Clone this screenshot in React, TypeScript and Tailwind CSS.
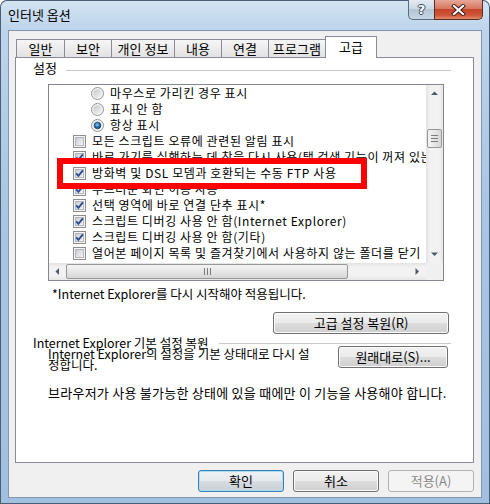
import React from 'react';

const FONT = "font-['Noto_Sans_CJK_KR',sans-serif]";

type Item = { kind: 'radio' | 'check'; label: string; on?: boolean };

const items: Item[] = [
  { kind: 'radio', label: '마우스로 가리킨 경우 표시' },
  { kind: 'radio', label: '표시 안 함' },
  { kind: 'radio', label: '항상 표시', on: true },
  { kind: 'check', label: '모든 스크립트 오류에 관련된 알림 표시' },
  { kind: 'check', label: '바로 가기를 실행하는 데 창을 다시 사용(탭 검색 기능이 꺼져 있는 경우)', on: true },
  { kind: 'check', label: '방화벽 및 DSL 모뎀과 호환되는 수동 FTP 사용', on: true },
  { kind: 'check', label: '부드러운 화면 이동 사용', on: true },
  { kind: 'check', label: '선택 영역에 바로 연결 단추 표시*', on: true },
  { kind: 'check', label: '스크립트 디버깅 사용 안 함(Internet Explorer)', on: true },
  { kind: 'check', label: '스크립트 디버깅 사용 안 함(기타)', on: true },
  { kind: 'check', label: '열어본 페이지 목록 및 즐겨찾기에서 사용하지 않는 폴더를 닫기' },
];

const tabs = [
  { label: '일반', w: 'w-[49px]' },
  { label: '보안', w: 'w-[48px]' },
  { label: '개인 정보', w: 'w-[64px]' },
  { label: '내용', w: 'w-[48px]' },
  { label: '연결', w: 'w-[48px]' },
  { label: '프로그램', w: 'w-[58px]' },
];

function CheckBox({ checked }: { checked?: boolean }) {
  return (
    <svg width="13" height="13" viewBox="0 0 13 13" className="shrink-0">
      <defs>
        <linearGradient id="cbInner" x1="0" y1="0" x2="1" y2="1">
          <stop offset="0" stopColor="#c9ccd1" />
          <stop offset="1" stopColor="#f6f6f6" />
        </linearGradient>
      </defs>
      <rect x="0.5" y="0.5" width="12" height="12" fill="#f5f5f5" stroke="#8e8f8f" />
      <rect x="2.5" y="2.5" width="8" height="8" fill="url(#cbInner)" stroke="#b3b7bc" />
      {checked && (
        <path d="M3.2 6.4 L5.4 8.9 L9.9 3.4" fill="none" stroke="#2c4a91" strokeWidth="1.8" />
      )}
    </svg>
  );
}

function Radio({ selected }: { selected?: boolean }) {
  return (
    <svg width="13" height="13" viewBox="0 0 13 13" className="shrink-0">
      <defs>
        <linearGradient id="rdInner" x1="0" y1="0" x2="1" y2="1">
          <stop offset="0" stopColor="#c5c8cc" />
          <stop offset="1" stopColor="#f4f4f4" />
        </linearGradient>
        <radialGradient id="rdDot" cx="0.45" cy="0.4" r="0.6">
          <stop offset="0" stopColor="#8fd4fb" />
          <stop offset="0.5" stopColor="#2b7fc5" />
          <stop offset="1" stopColor="#0c3461" />
        </radialGradient>
      </defs>
      <circle cx="6.5" cy="6.5" r="6" fill="#f4f4f4" stroke="#8f9296" />
      <circle cx="6.5" cy="6.5" r="4.2" fill="url(#rdInner)" />
      {selected && <circle cx="6.5" cy="6.5" r="3.3" fill="url(#rdDot)" stroke="#1c3350" strokeWidth="0.6" />}
    </svg>
  );
}

function Arrow({ dir }: { dir: 'up' | 'down' | 'left' | 'right' }) {
  const pts: Record<string, string> = {
    up: '1,5 4.5,1.5 8,5',
    down: '1,1.5 4.5,5 8,1.5',
    left: '5,1 1.5,4.5 5,8',
    right: '1.5,1 5,4.5 1.5,8',
  };
  const vertical = dir === 'up' || dir === 'down';
  return (
    <svg width={vertical ? 9 : 7} height={vertical ? 7 : 9} viewBox={vertical ? '0 0 9 7' : '0 0 7 9'}>
      <polygon points={pts[dir]} fill="#505a66" />
    </svg>
  );
}

function VScroll() {
  return (
    <div className="w-[17px] flex flex-col bg-[linear-gradient(to_right,#e3e3e3,#f2f2f2_25%,#f2f2f2_75%,#e6e6e6)]">
      <div className="h-[17px] flex items-center justify-center">
        <Arrow dir="up" />
      </div>
      <div className="flex-1 pt-[27px]">
        <div className="mx-[1px] h-[19px] rounded-[2px] border border-[#979797] bg-[linear-gradient(to_right,#f4f4f4,#e6e6e6_50%,#d6d6d6)] flex flex-col items-center justify-center gap-[2px]">
          <div className="w-[7px] h-px bg-[#7a7a7a]" />
          <div className="w-[7px] h-px bg-[#7a7a7a]" />
          <div className="w-[7px] h-px bg-[#7a7a7a]" />
        </div>
      </div>
      <div className="h-[17px] flex items-center justify-center">
        <Arrow dir="down" />
      </div>
    </div>
  );
}

function HScroll() {
  return (
    <div className="flex-1 flex bg-[linear-gradient(to_bottom,#e3e3e3,#f2f2f2_25%,#f2f2f2_75%,#e6e6e6)]">
      <div className="w-[17px] flex items-center justify-center">
        <Arrow dir="left" />
      </div>
      <div className="flex-1 py-[1px]">
        <div className="w-[282px] h-full rounded-[2px] border border-[#979797] bg-[linear-gradient(to_bottom,#f4f4f4,#e6e6e6_50%,#d6d6d6)] flex items-center justify-center gap-[2px]">
          <div className="w-px h-[7px] bg-[#7a7a7a]" />
          <div className="w-px h-[7px] bg-[#7a7a7a]" />
          <div className="w-px h-[7px] bg-[#7a7a7a]" />
        </div>
      </div>
      <div className="w-[17px] flex items-center justify-center">
        <Arrow dir="right" />
      </div>
    </div>
  );
}

function WinButton({
  children,
  className = '',
  kind = 'normal',
}: {
  children: React.ReactNode;
  className?: string;
  kind?: 'normal' | 'default' | 'disabled';
}) {
  const styles = {
    normal:
      'border-[#707070] bg-[linear-gradient(to_bottom,#f2f2f2_0%,#ebebeb_49%,#dddddd_50%,#cfcfcf_100%)] shadow-[inset_0_0_0_1px_#fbfbfb] text-black',
    default:
      'border-[#3c7fb1] bg-[linear-gradient(to_bottom,#eef2f5_0%,#e6eaee_49%,#d7dde2_50%,#c9d0d6_100%)] shadow-[inset_0_0_0_1px_#a9dcf5] text-black',
    disabled: 'border-[#adb2b5] bg-[#f4f4f4] text-[#8a8a8a]',
  };
  return (
    <div
      className={`h-[22px] shrink-0 flex items-center justify-center rounded-[3px] border leading-[14px] ${styles[kind]} ${className}`}
    >
      {children}
    </div>
  );
}

export default function App() {
  return (
    <div
      className={`relative w-[490px] h-[504px] overflow-hidden rounded-t-[7px] text-[13px] text-black ${FONT} bg-[linear-gradient(to_bottom,#d4e4f3_0px,#bdd4eb_30px,#a9c6e3_200px,#a1c0e0_504px)] shadow-[inset_0_0_0_1px_#4a5f75]`}
    >
      {/* title bar */}
      <div className="h-[30px] flex">
        <div className="pl-[8px] pt-[8px] leading-[14px] text-[13px]">인터넷 옵션</div>
        <div className="ml-auto mr-[7px] flex h-[20px]">
          <div className="w-[26px] flex items-center justify-center border border-t-0 border-r-0 border-[#5b6c7e] rounded-bl-[5px] bg-[linear-gradient(to_bottom,#e2ebf4,#cbd9e7_45%,#b3c6d8_50%,#c6d6e5)]">
            <span className="font-['DejaVu_Sans',sans-serif] font-bold text-[13px] leading-[14px] text-white [text-shadow:1px_0_0_#3a4656,-1px_0_0_#3a4656,0_1px_0_#3a4656,0_-1px_0_#3a4656]">
              ?
            </span>
          </div>
          <div className="w-[49px] flex items-center justify-center border border-t-0 border-[#5a2c24] rounded-br-[5px] bg-[linear-gradient(to_bottom,#e7a898,#d8775f_45%,#c4452c_50%,#cf5538_80%,#e28d6c)]">
            <svg width="15" height="12" viewBox="0 0 15 12">
              <path d="M3 2 L12 10 M12 2 L3 10" stroke="#3b1a14" strokeWidth="4" strokeLinecap="square" />
              <path d="M3 2 L12 10 M12 2 L3 10" stroke="#ffffff" strokeWidth="2.2" strokeLinecap="square" />
            </svg>
          </div>
        </div>
      </div>

      {/* client area */}
      <div className="ml-[8px] w-[474px] h-[468px] bg-[#f0f0f0] border border-[#8397ac] flex flex-col">
        {/* tab strip */}
        <div className="relative z-10 mt-[5px] ml-[7px] h-[21px] flex items-end">
          {tabs.map((t) => (
            <div
              key={t.label}
              className={`${t.w} h-[18px] flex items-center justify-center border border-b-0 border-[#898c95] -ml-px first:ml-0 bg-[linear-gradient(to_bottom,#f6f6f6,#ececec_50%,#e2e2e2)] leading-[14px]`}
            >
              {t.label}
            </div>
          ))}
          <div className="w-[52px] h-[22px] -mb-px -ml-px flex items-start justify-center pt-[3px] border border-b-0 border-[#898c95] bg-white leading-[14px]">
            고급
          </div>
        </div>

        {/* tab page */}
        <div className="ml-[6px] w-[459px] h-[406px] border border-[#898c95] bg-white flex flex-col">
          <div className="mt-[3px] h-[14px] flex items-center pl-[17px] pr-[22px]">
            <span className="leading-[14px]">설정</span>
            <div className="ml-[9px] mt-[4px] flex-1 h-px bg-[#c9c9c9]" />
          </div>

          <div className="ml-[32px] mt-[9px] w-[396px] h-[197px] border border-[#828790] bg-white flex flex-col">
            <div className="flex h-[178px]">
              <div className="flex-1 overflow-hidden text-[12px] tracking-[0.6px]">
                {items.map((it) => (
                  <div
                    key={it.label}
                    className={`h-[16px] flex items-center gap-[6px] whitespace-nowrap ${
                      it.kind === 'radio' ? 'pl-[42px]' : 'pl-[24px]'
                    }`}
                  >
                    {it.kind === 'radio' ? <Radio selected={it.on} /> : <CheckBox checked={it.on} />}
                    <span className="leading-[16px]">{it.label}</span>
                  </div>
                ))}
              </div>
              <VScroll />
            </div>
            <div className="flex h-[17px]">
              <HScroll />
              <div className="w-[17px] bg-[#f0f0f0]" />
            </div>
          </div>

          <div className="mt-[6px] ml-[36px] h-[14px] leading-[14px] text-[12.5px]">
            *Internet Explorer를 다시 시작해야 적용됩니다.
          </div>

          <WinButton className="mt-[11px] ml-[257px] w-[176px]">고급 설정 복원(R)</WinButton>

          <div className="mt-[3px] h-[11px] flex items-center pl-[17px] pr-[22px]">
            <span className="leading-[11px] whitespace-nowrap text-[12.5px]">Internet Explorer 기본 설정 복원</span>
            <div className="ml-[11px] mt-[2px] flex-1 h-px bg-[#c9c9c9]" />
          </div>

          <div className="flex items-start">
            <div className="ml-[32px] w-[280px] leading-[11px] whitespace-nowrap text-[12.5px]">
              Internet Explorer의 설정을 기본 상태대로 다시 설
              <br />
              정합니다.
            </div>
            <WinButton className="ml-[10px] -mt-[2px] w-[110px]">원래대로(S)...</WinButton>
          </div>

          <div className="mt-[17px] ml-[32px] leading-[12px] whitespace-nowrap tracking-[0.25px]">
            브라우저가 사용 불가능한 상태에 있을 때에만 이 기능을 사용해야 합니다.
          </div>
        </div>

        {/* dialog buttons */}
        <div className="mt-[7px] mr-[7px] flex justify-end gap-[9px]">
          <WinButton kind="default" className="w-[86px]">
            확인
          </WinButton>
          <WinButton className="w-[86px]">취소</WinButton>
          <WinButton kind="disabled" className="w-[86px]">
            적용(A)
          </WinButton>
        </div>
      </div>

      {/* red highlight drawn over the screenshot */}
      <div className="absolute left-[57px] top-[158px] w-[310px] h-[31px] border-[6px] border-[#ff0000]" />
    </div>
  );
}
